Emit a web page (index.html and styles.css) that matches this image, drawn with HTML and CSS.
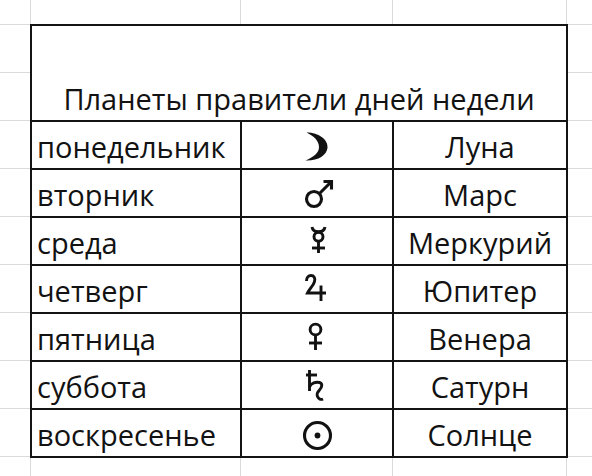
FILE: index.html
```html
<!DOCTYPE html>
<html lang="ru">
<head>
<meta charset="utf-8">
<title>Планеты правители дней недели</title>
<link rel="stylesheet" href="styles.css">
</head>
<body>
<div class="sheet">
  <div class="table">
    <div class="cell title">Планеты правители дней недели</div>

    <div class="cell day">понедельник</div>
    <div class="cell sym"><svg class="glyph" viewBox="0 0 40 46" aria-label="Луна"><path class="solid" d="M9.5,10.5 C22,10.5 31.5,18 30.5,26 C29.5,33.5 21,39 8.5,38.5 C16.5,35 22,31 22,25 C22,19 17,14 9.5,10.5 Z"/></svg></div>
    <div class="cell planet">Луна</div>

    <div class="cell day">вторник</div>
    <div class="cell sym"><svg class="glyph thick" viewBox="0 0 40 46" aria-label="Марс"><circle cx="17" cy="29" r="7.5"/><path d="M22.5,23.5 L34.5,11.5"/><path d="M26.5,11.5 H34.5 V19.5"/></svg></div>
    <div class="cell planet">Марс</div>

    <div class="cell day">среда</div>
    <div class="cell sym"><svg class="glyph" viewBox="0 0 40 46" aria-label="Меркурий"><path d="M15,9 C15.5,12 18,13.8 21.5,13.8 C25,13.8 27.5,12 28,9"/><circle cx="21.5" cy="18.8" r="4.5"/><path d="M21.5,23.3 V35"/><path d="M15,30 H28"/></svg></div>
    <div class="cell planet">Меркурий</div>

    <div class="cell day">четверг</div>
    <div class="cell sym"><svg class="glyph" viewBox="0 0 40 46" aria-label="Юпитер"><path d="M9.5,15 C9.5,11.5 11.5,9.5 14,9.5 C17,9.5 18.5,12 17.5,15.5 C16.5,19.5 12.5,23 10.5,27 H29"/><path d="M24,19.5 V35"/></svg></div>
    <div class="cell planet">Юпитер</div>

    <div class="cell day">пятница</div>
    <div class="cell sym"><svg class="glyph" viewBox="0 0 40 46" aria-label="Венера"><circle cx="18.5" cy="15.5" r="5.4"/><path d="M18.5,21 V36"/><path d="M12,29 H25"/></svg></div>
    <div class="cell planet">Венера</div>

    <div class="cell day">суббота</div>
    <div class="cell sym"><svg class="glyph" viewBox="0 0 40 46" aria-label="Сатурн"><path d="M12.5,8 V29"/><path d="M9,13 H20"/><path d="M12.5,25 C14,21 19,19.5 22.5,20.5 C26,21.5 25,25.5 22.5,28 C20.5,30 19.5,32 20.5,34.5 C21.5,37 24,38 26,37"/></svg></div>
    <div class="cell planet">Сатурн</div>

    <div class="cell day">воскресенье</div>
    <div class="cell sym"><svg class="glyph thick" viewBox="0 0 40 46" aria-label="Солнце"><circle cx="20.5" cy="25.5" r="13"/><circle class="solid" cx="20.5" cy="25.5" r="2.9"/></svg></div>
    <div class="cell planet">Солнце</div>
  </div>
</div>
</body>
</html>
```

FILE: styles.css
```css
html, body {
  margin: 0;
  padding: 0;
}

body {
  width: 592px;
  height: 476px;
  overflow: hidden;
  font-family: "Open Sans", "Noto Sans", "Liberation Sans", sans-serif;
  color: #121212;
  background-color: #ffffff;
  background-image:
    linear-gradient(to right,
      transparent 30px, #dadada 30px, #dadada 31px, transparent 31px,
      transparent 240px, #dadada 240px, #dadada 241px, transparent 241px,
      transparent 392px, #dadada 392px, #dadada 393px, transparent 393px,
      transparent 566px, #dadada 566px, #dadada 567px, transparent 567px),
    linear-gradient(to bottom, #dadada 0, #dadada 1px, transparent 1px);
  background-size: 100% 100%, 100% 48px;
  background-position: 0 0, 0 24px;
  background-repeat: no-repeat, repeat;
}

.sheet {
  padding: 24px 0 0 30px;
}

.table {
  display: grid;
  grid-template-columns: 208px 150px 172px;
  grid-template-rows: 94px;
  grid-auto-rows: 46px;
  gap: 2px;
  padding: 2px;
  width: max-content;
  background: #141414;
}

.cell {
  background: #ffffff;
  display: flex;
  align-items: flex-end;
  font-size: 29px;
  line-height: 30px;
  padding-bottom: 6px;
  box-sizing: border-box;
  white-space: nowrap;
}

.title {
  grid-column: 1 / -1;
  justify-content: center;
}

.day {
  padding-left: 5px;
}

.planet {
  justify-content: center;
}

.sym {
  justify-content: center;
  align-items: flex-start;
  padding: 0;
}

.glyph {
  display: block;
  width: 40px;
  height: 46px;
  fill: none;
  stroke: #121212;
  stroke-width: 2.9;
}

.glyph.thick {
  stroke-width: 3.1;
}

.glyph .solid {
  fill: #121212;
  stroke: none;
}
```
